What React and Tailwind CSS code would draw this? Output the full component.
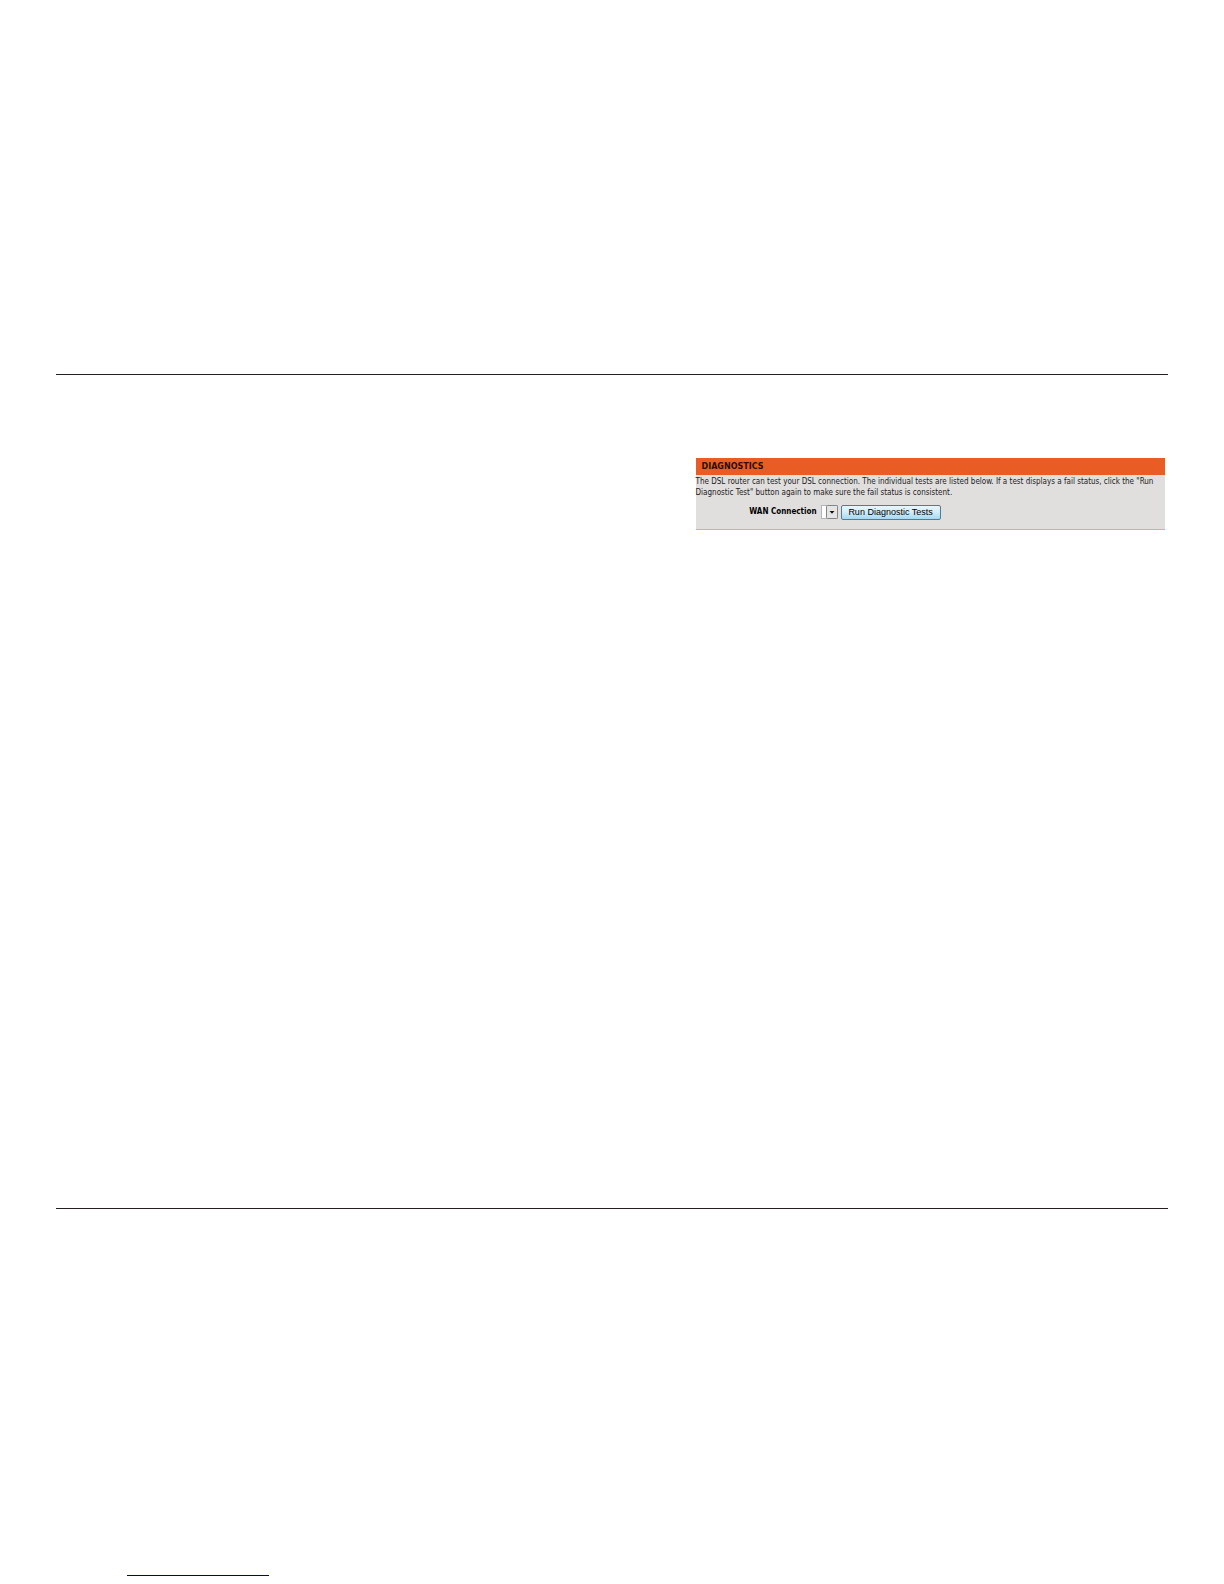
export default function App() {
  return (
    <div className="bg-white px-14 pb-2">
      <main className="mt-[374px] min-h-[835px] border-y border-[#231f20] pt-[83px] pr-[3px]">
        <section
          className="ml-auto w-[42.33%] border-b border-[#f0a48c] bg-[#e1dfde] text-black"
          style={{ fontFamily: '"DejaVu Sans Condensed", "DejaVu Sans", sans-serif' }}
        >
          <h1
            className="h-[17px] bg-[#e95d24] pl-[6px] text-[8px] leading-[17px] font-bold text-[#2a0d04]"
            style={{ fontFamily: '"DejaVu Sans", sans-serif' }}
          >
            DIAGNOSTICS
          </h1>
          <p className="pt-px text-[8px] leading-[11px] text-[#1c1c1c]">
            The DSL router can test your DSL connection. The individual tests are listed below. If a test
            displays a fail status, click the "Run Diagnostic Test" button again to make sure the fail status is
            consistent.
          </p>
          <form className="flex h-[31px] items-center pb-[3px]" onSubmit={(e) => e.preventDefault()}>
            <label htmlFor="wan" className="w-[121px] text-right text-[8px] font-bold whitespace-nowrap">
              WAN Connection
            </label>
            <div className="relative ml-1 h-[14px] w-[17px]">
              <select
                id="wan"
                className="block h-full w-full appearance-none border border-[#aeb4ba] bg-white text-[8px]"
              ></select>
              <svg
                className="pointer-events-none absolute top-0 right-0 h-[14px] w-[12px]"
                viewBox="0 0 12 14"
                aria-hidden="true"
              >
                <rect x="0.5" y="0.5" width="11" height="13" rx="1" fill="#e4e4e4" stroke="#858585" />
                <path d="M3.5 6h5L6 8.7z" fill="#111" />
              </svg>
            </div>
            <button
              type="submit"
              className="ml-[3px] h-[15px] w-[100px] rounded-[2px] border border-[#4a7d9f] bg-linear-to-b from-[#e8f6fd] via-[#d0ecfa] to-[#a5d8f0] text-[9px] leading-none whitespace-nowrap"
              style={{ fontFamily: '"Liberation Sans", Arial, sans-serif' }}
            >
              Run Diagnostic Tests
            </button>
          </form>
        </section>
      </main>
      <footer className="mt-[366px] pl-[71px]">
        <a href="#top" aria-label="Page link" className="block h-px w-[142px] bg-[#000080]"></a>
      </footer>
    </div>
  );
}
